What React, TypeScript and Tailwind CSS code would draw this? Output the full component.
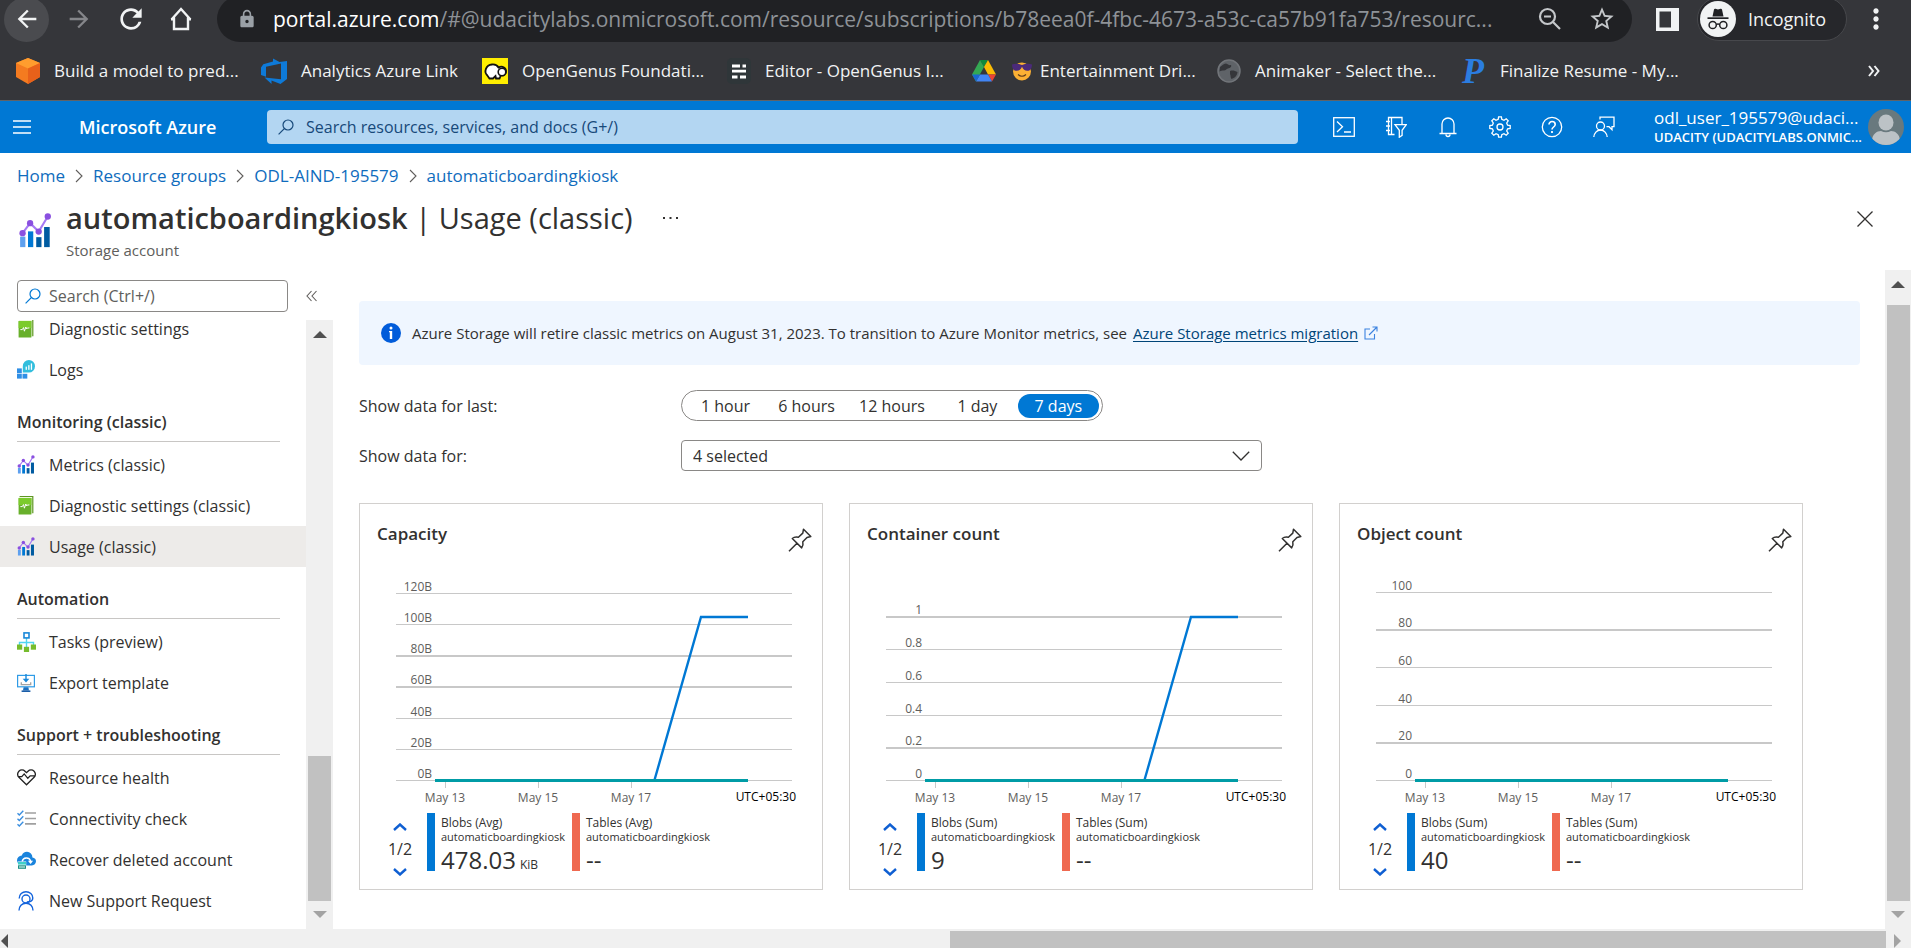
import type { ReactNode } from "react";
import { MdArrowBack, MdArrowForward, MdRefresh, MdLock, MdStarBorder, MdMoreVert } from "react-icons/md";

const FONT = "font-['Open_Sans','Noto_Sans',sans-serif]";

/* ---------- icons ---------- */

function MetricsIcon({ className }: { className: string }) {
  return (
    <svg viewBox="0 0 18 20" className={className} aria-hidden="true">
      <rect x="0.5" y="13.5" width="3" height="6" fill="#5ea0ef" />
      <rect x="5" y="10.5" width="3" height="9" fill="#0078d4" />
      <rect x="9.7" y="13.8" width="3" height="5.7" fill="#005ba1" />
      <rect x="14.2" y="8" width="3.2" height="11.5" fill="#005ba1" />
      <path d="M1.9 11.5 6.2 5.8l4.9 4.8L16.3 2" fill="none" stroke="#a67af4" strokeWidth="1.2" />
      <g fill="#8a50e0">
        <circle cx="1.9" cy="11.5" r="1.8" />
        <circle cx="6.2" cy="5.8" r="1.8" />
        <circle cx="11.1" cy="10.6" r="1.8" />
        <circle cx="16.3" cy="2" r="1.8" />
      </g>
    </svg>
  );
}

function DiagnosticIcon() {
  return (
    <svg viewBox="0 0 18 19" className="h-[19px] w-[18px]" aria-hidden="true">
      <path d="M2.8 0h13.6v17.2h-1.6V1.4H2.2z" fill="#5e9624" />
      <path d="M2.2 1.1h13v16.6h-.9V2H1.7z" fill="#eef8df" />
      <rect x="1.6" y="2" width="12.8" height="16.6" rx="0.4" fill="#68b02b" />
      <path d="M1.6 2.400a.4.400 0 0 1 .4-.4h12a.4.400 0 0 1 .4.400V9H1.600z" fill="#7ccb2c" />
      <path d="M3.4 10.600h1.900l1.200-2 .9 3.600L8.800 8l.8 2 .8-1h2" fill="none" stroke="#fff" strokeWidth="1" />
    </svg>
  );
}

function LogsIcon() {
  return (
    <svg viewBox="0 0 18 19" className="h-[19px] w-[18px]" aria-hidden="true">
      <g fill="#2f8fe6">
        <rect x="0" y="8.400" width="4.800" height="4.800" />
        <rect x="0" y="13.800" width="4.800" height="4.800" />
        <rect x="5.500" y="13.800" width="4.800" height="4.800" />
      </g>
      <path d="M11.900 0a6.100 6.300 0 0 1 0 12.600H5.800V6.300A6.100 6.300 0 0 1 11.900 0z" fill="#32bedd" />
      <rect x="8.600" y="6.600" width="1.300" height="3.200" fill="#fff" />
      <rect x="11.200" y="5.200" width="1.300" height="4.600" fill="#fff" />
      <rect x="13.800" y="3.400" width="1.300" height="6.400" fill="#fff" />
    </svg>
  );
}

function TasksIcon() {
  return (
    <svg viewBox="0 0 19 20" className="h-5 w-[19px]" aria-hidden="true">
      <path d="M9.5 6v9M2.5 15v-4.5h14V15" fill="none" stroke="#50d5f0" strokeWidth="1.4" />
      <rect x="7" y="0.9" width="5" height="5" fill="#fff" stroke="#1988d9" strokeWidth="1.6" />
      <g fill="#76bc2d">
        <rect x="0" y="12.5" width="5.2" height="5.2" />
        <rect x="6.9" y="14.8" width="5.2" height="5.2" />
        <rect x="13.8" y="12.5" width="5.2" height="5.2" />
      </g>
    </svg>
  );
}

function ExportIcon() {
  return (
    <svg viewBox="0 0 18 18" className="size-[18px]" aria-hidden="true">
      <rect x="0.6" y="1.4" width="16.8" height="11.4" fill="#fff" stroke="#2f9be6" strokeWidth="1.2" />
      <path d="M6.6 13.2h4.8l.6 3.2H6z" fill="#1b6fbf" />
      <rect x="4.6" y="16.4" width="8.8" height="1.6" fill="#1b5ea8" />
      <path d="M4.3 8.2v2.4h9.4V8.2" fill="none" stroke="#a3a3a3" strokeWidth="1.3" />
      <path d="M8.3 0h1.4v4.8h2.6L9 8.6 5.7 4.8h2.6z" fill="#1988d9" />
    </svg>
  );
}

function HealthIcon() {
  return (
    <svg viewBox="0 0 19 17" className="h-[17px] w-[19px]" aria-hidden="true">
      <path
        d="M9.5 15.8 1.9 8.3a4.3 4.3 0 0 1 0-6.1 4.3 4.3 0 0 1 6.1 0l1.5 1.5 1.5-1.5a4.3 4.3 0 0 1 6.1 0 4.3 4.3 0 0 1 0 6.1zM1.4 7.6h3.4l2.4-2.7 3.6 4.4 2.4-2.5h4.6"
        fill="none"
        stroke="#222"
        strokeWidth="1.3"
      />
    </svg>
  );
}

function ChecklistIcon() {
  return (
    <svg viewBox="0 0 19 17" className="h-[17px] w-[19px]" aria-hidden="true">
      <path d="M8 3h11M8 8.5h11M8 13.9h11" stroke="#a0a0a0" strokeWidth="1.7" />
      <path d="m.5 3.2 1.8 1.7L6.3.7M.5 8.7l1.8 1.7 4-4.2M.5 14.2l1.8 1.7 4-4.2" fill="none" stroke="#3b8fe0" strokeWidth="1.4" />
    </svg>
  );
}

function RecoverIcon() {
  return (
    <svg viewBox="0 0 19 18" className="h-[18px] w-[19px]" aria-hidden="true">
      <path d="M19 10.3a4 4 0 0 0-3.6-3.9A5.4 5.4 0 0 0 10 .8a5.5 5.5 0 0 0-5.2 3.6A5 5 0 0 0 0 9.4c0 2.9 2.3 5 5.2 5h9.7c2.3 0 4.1-1.8 4.1-4.1z" fill="#1a84dd" />
      <path d="M5.2 10.4a4.3 4.3 0 0 1 8.3-.6v1.6" fill="none" stroke="#fff" strokeWidth="1.5" />
      <path d="M10.9 9.7h5.2l-2.5 3.2z" fill="#fff" />
      <rect x="0.6" y="10.5" width="8.6" height="7.5" fill="#fff" />
      <rect x="1" y="11" width="8" height="2.6" fill="#3fd0c9" />
      <rect x="1" y="14.3" width="8" height="3.5" fill="#1c8f84" />
      <rect x="2" y="15.4" width="6" height="1.2" fill="#c9ebe7" />
    </svg>
  );
}

function SupportIcon() {
  return (
    <svg viewBox="0 0 18 20" className="h-5 w-[18px]" fill="none" stroke="#1464dc" strokeWidth="1.4" aria-hidden="true">
      <circle cx="9" cy="8" r="4" />
      <path d="M2.2 7.5C2.2 3.4 5.2.8 9 .8s6.8 2.6 6.8 6.200c0 2.500-1.800 4-6 4M2 19.500c0-4 2.900-7.300 7-7.300s7 3.300 7 7.300" />
    </svg>
  );
}

function SearchIcon({ className }: { className: string }) {
  return (
    <svg viewBox="0 0 16 16" className={className} fill="none" stroke="currentColor" strokeWidth="1.2" aria-hidden="true">
      <circle cx="10" cy="6" r="5" />
      <path d="M6.3 9.7.6 15.4" />
    </svg>
  );
}

function ChevronRight() {
  return (
    <svg viewBox="0 0 8 14" className="h-3.5 w-2" fill="none" stroke="#605e5c" strokeWidth="1.1" aria-hidden="true">
      <path d="m1 1 6 6-6 6" />
    </svg>
  );
}

function PinIcon() {
  return (
    <svg viewBox="0 0 24 24" className="size-6" fill="none" stroke="#323130" strokeWidth="1.5" strokeLinejoin="round" aria-hidden="true">
      <path d="m15.500 1.200 7.300 7.300-3.800.9-4.200 4.400c.5 2.200.3 4.300-1.100 6.100L4.300 10.500c1.700-1.500 3.900-1.700 6.100-1.200l4.400-4.200zM9 15.200l-8 8" />
    </svg>
  );
}

function Arrow({ dir, color = "#505050" }: { dir: "up" | "down" | "left" | "right"; color?: string }) {
  if (dir === "up" || dir === "down") {
    return (
      <svg viewBox="0 0 14 7" className="h-[7px] w-3.5" aria-hidden="true">
        <path d={dir === "up" ? "M0 7 7 0l7 7z" : "M0 0l7 7 7-7z"} fill={color} />
      </svg>
    );
  }
  return (
    <svg viewBox="0 0 7 14" className="h-3.5 w-[7px]" aria-hidden="true">
      <path d={dir === "left" ? "M7 0 0 7l7 7z" : "M0 0l7 7-7 7z"} fill={color} />
    </svg>
  );
}

/* ---------- browser chrome ---------- */

function Bookmark({ icon, label, wide = true, tight = false }: { icon: ReactNode; label: string; wide?: boolean; tight?: boolean }) {
  return (
    <a href="#" className={`flex shrink-0 items-center ${tight ? "gap-2" : "gap-3.5"} ${wide ? "w-[245px]" : "w-[221px]"}`}>
      <span className="flex h-[26px] shrink-0 items-center">{icon}</span>
      <span className="whitespace-nowrap">{label}</span>
    </a>
  );
}

function BrowserBar() {
  return (
    <div className="shrink-0 overflow-hidden border-b border-[#5f6368] bg-[#35363a] text-[#f1f3f4]">
      <div className="-mt-1 flex h-[46px] items-center pl-1">
        <button aria-label="Back" className="flex size-[45px] items-center justify-center rounded-full bg-[#4a4b4f]">
          <MdArrowBack className="size-7" />
        </button>
        <button aria-label="Forward" className="ml-2 flex size-11 items-center justify-center text-[#85868a]">
          <MdArrowForward className="size-7" />
        </button>
        <button aria-label="Reload" className="ml-2 flex size-11 items-center justify-center">
          <MdRefresh className="size-8" />
        </button>
        <button aria-label="Home" className="ml-1.5 flex size-11 items-center justify-center">
          <svg viewBox="0 0 24 24" className="size-6" fill="none" stroke="currentColor" strokeWidth="2.4" aria-hidden="true">
            <path d="M2.500 12.500 12 2l9.500 10.500M5 10.500V22h14V10.500M2 12.300h4M18 12.300h4" />
          </svg>
        </button>
        <div className="ml-3.5 flex h-[46px] min-w-0 flex-1 items-center rounded-full bg-[#202124] pr-4 pl-5">
          <MdLock className="size-5 shrink-0 text-[#9aa0a6]" />
          <div className="ml-4 min-w-0 flex-1 truncate text-[21px] leading-8 text-[#8e9297]">
            <span className="text-white">portal.azure.com</span>
            /#@udacitylabs.onmicrosoft.com/resource/subscriptions/b78eea0f-4fbc-4673-a53c-ca57b91fa753/resourc...
          </div>
          <button aria-label="Zoom" className="ml-4 text-[#c4c7ca]">
            <svg viewBox="0 0 24 24" className="size-6" fill="none" stroke="currentColor" strokeWidth="2.2" aria-hidden="true">
              <circle cx="9.5" cy="9.5" r="7.5" />
              <path d="m15 15 7 7M6 9.5h7" />
            </svg>
          </button>
          <button aria-label="Bookmark this tab" className="ml-[26px] text-[#c4c7ca]">
            <MdStarBorder className="size-7" />
          </button>
        </div>
        <button aria-label="Side panel" className="ml-6">
          <svg viewBox="0 0 23 23" className="size-[23px]" aria-hidden="true">
            <path d="M0 0h23v23H0zM3.5 3.5v16h11.5v-16z" fill="#f1f3f4" fillRule="evenodd" />
          </svg>
        </button>
        <button className="ml-[18px] flex h-11 w-[150px] items-center rounded-full border border-[#47484c] bg-[#26272b] pl-0.5 text-lg">
          <svg viewBox="0 0 36 36" className="size-9 shrink-0" aria-hidden="true">
            <circle cx="18" cy="18" r="18" fill="#f1f3f4" />
            <path d="M12.500 15.500 14 8.500c.2-.8.8-1 1.500-.8l2.500.7 2.500-.7c.7-.2 1.300 0 1.500.8l1.500 7z" fill="#202124" />
            <rect x="7.5" y="16.3" width="21" height="1.7" fill="#202124" />
            <g fill="none" stroke="#202124" strokeWidth="1.5">
              <circle cx="12.7" cy="24" r="3.6" />
              <circle cx="23.3" cy="24" r="3.6" />
              <path d="M16.3 23.5q1.700-1.200 3.400 0" />
            </g>
          </svg>
          <span className="ml-3">Incognito</span>
        </button>
        <button aria-label="Menu" className="mr-[19px] ml-[13px]">
          <MdMoreVert className="size-8" />
        </button>
      </div>
      <div className="flex h-[58px] items-center pl-4 text-[17px]">
        <Bookmark
          label="Build a model to pred..."
          icon={
            <svg viewBox="0 0 24 26" className="h-[26px] w-6" aria-hidden="true">
              <path d="M12 0l12 5v14l-12 7L0 19V5z" fill="#f47b20" />
              <path d="M12 0l12 5-12 5.500L0 5z" fill="#ff9d2e" />
              <path d="M24 5v14l-12 7V10.500z" fill="#e8611a" />
            </svg>
          }
        />
        <Bookmark
          wide={false}
          label="Analytics Azure Link"
          icon={
            <svg viewBox="0 0 26 26" className="size-[26px]" aria-hidden="true">
              <path d="M12 0.500 18.500 4 26 3v18l-6.500 5-9-3.500V26L3.500 19.500 20 21.200V5.500L5 8.800v9.900L0 17V9.500L2.300 6.200 12 3.500z" fill="#0e7ad8" />
            </svg>
          }
        />
        <Bookmark
          label="OpenGenus Foundati..."
          icon={
            <svg viewBox="0 0 26 26" className="size-[26px]" aria-hidden="true">
              <rect width="26" height="26" fill="#ffee00" />
              <path d="M5 17c-3-3-1.500-10 5-10.500 3.500-.3 5.500 1 6.500 3 4-2.500 8 1 7.500 4.500-.5 3-3 4-5 3l-1.500 3.500h-3.500L13.500 18 11 20.500H7.500z" fill="#fff" stroke="#111" strokeWidth="1.8" />
              <circle cx="20" cy="14" r="3.8" fill="#fff" stroke="#111" strokeWidth="1.6" />
            </svg>
          }
        />
        <Bookmark
          label="Editor - OpenGenus I..."
          icon={
            <svg viewBox="0 0 24 26" className="h-[26px] w-6" aria-hidden="true">
              <rect width="24" height="26" rx="5" fill="#2f3639" />
              <path d="M5 8h8M15.500 8H19M5 13.200h14M5 19h5.500M13 19h6" stroke="#fff" strokeWidth="2.8" />
            </svg>
          }
        />
        <Bookmark
          tight
          label="Entertainment Dri..."
          icon={
            <span className="flex items-center gap-4">
              <svg viewBox="0 0 24 22" className="h-[22px] w-6" aria-hidden="true">
                <path d="M8 0h8l-4 7z" fill="#0f8a3c" />
                <path d="M8 0l4 7-8 14.500L0 14.500z" fill="#34a853" />
                <path d="M16 0l8 14.500h-8L12 7z" fill="#fbbc04" />
                <path d="M24 14.500l-4 7-4-7z" fill="#ea4335" />
                <path d="M8 14.500h8l4 7H4z" fill="#4285f4" />
                <path d="M0 14.500h8l-4 7z" fill="#1967d2" />
              </svg>
              <svg viewBox="0 0 20 20" className="size-5" aria-hidden="true">
                <circle cx="10" cy="10.5" r="9" fill="#fbb034" />
                <path d="M0 3.500c3-1 6.500-.8 10 .5 3.500-1.300 7-1.500 10-.5-.2 4-1.500 6.300-4.700 6.300-2.600 0-4.200-1.600-5.300-4-1.100 2.400-2.700 4-5.300 4C1.500 9.800.2 7.500 0 3.500z" fill="#4b2a7a" />
                <path d="M6 13.500q4 3.500 8 0" fill="none" stroke="#5d3a1a" strokeWidth="1.2" />
              </svg>
            </span>
          }
        />
        <Bookmark
          label="Animaker - Select the..."
          icon={
            <svg viewBox="0 0 24 24" className="size-6" aria-hidden="true">
              <circle cx="12" cy="12" r="11" fill="#5f6368" stroke="#72757a" strokeWidth="1.5" />
              <path d="M3 8c2-1 3-3 6-3.500 2 1 3 2 5 1.500 1 2-1 3-3 3.500s-2 2-4 2-3 0-4.500 1zM13 12c3-1 5 0 7.500 1-.5 4-3 6-6 7-1.500-2-.5-3.500-1.500-5z" fill="#35363a" />
            </svg>
          }
        />
        <Bookmark
          label="Finalize Resume - My..."
          icon={<span className="w-6 font-['Liberation_Serif',serif] text-[36px] leading-none font-bold text-[#2b7de0] italic">P</span>}
        />
        <button aria-label="More bookmarks" className="mr-[31px] ml-auto">
          <svg viewBox="0 0 12 12" className="size-3" fill="none" stroke="currentColor" strokeWidth="2" aria-hidden="true">
            <path d="m1 1 4 5-4 5M6.5 1l4 5-4 5" />
          </svg>
        </button>
      </div>
    </div>
  );
}

/* ---------- portal header ---------- */

function HeaderButton({ label, children }: { label: string; children: ReactNode }) {
  return (
    <button aria-label={label} className="flex w-[52px] items-center justify-center">
      <svg viewBox="0 0 22 22" className="size-[22px]" fill="none" stroke="#fff" strokeWidth="1.3" aria-hidden="true">
        {children}
      </svg>
    </button>
  );
}

function PortalHeader() {
  return (
    <header className="flex h-[52px] shrink-0 items-center bg-[#0078d4] text-white">
      <button aria-label="Show portal menu" className="ml-[13px]">
        <svg viewBox="0 0 18 14" className="h-3.5 w-[18px]" stroke="#fff" strokeWidth="1.3" aria-hidden="true">
          <path d="M0 1h18M0 7h18M0 13h18" />
        </svg>
      </button>
      <a href="#" className="ml-12 w-[188px] text-lg font-semibold whitespace-nowrap">
        Microsoft Azure
      </a>
      <label className="flex h-[34px] min-w-0 flex-1 items-center gap-3 rounded-sm bg-[#b3d6f2] px-[11px] text-[#17497a]">
        <SearchIcon className="size-4 shrink-0" />
        <input
          type="search"
          aria-label="Search resources, services, and docs"
          placeholder="Search resources, services, and docs (G+/)"
          className="min-w-0 flex-1 bg-transparent text-base outline-none placeholder:text-[#17497a]"
        />
      </label>
      <div className="ml-5 flex">
        <HeaderButton label="Cloud Shell">
          <rect x="0.7" y="1.7" width="20.6" height="18.6" />
          <path d="m4 5.500 5.500 5.300L4 16M11 16h7" />
        </HeaderButton>
        <HeaderButton label="Directories and subscriptions">
          <path d="M9.500 18.500H3.500v-17h13.500v7M6.500 1.500v17M1 5.500h4M1 10h4M1 14.500h4M10 8.700h11.300l-4.200 5.600v5l-2.800 1.900v-6.900z" />
        </HeaderButton>
        <HeaderButton label="Notifications">
          <path d="M2.500 17.500h17M5 17.500V8a6 6 0 0 1 12 0v9.500M9 18.500a2 2 0 0 0 4 0" />
        </HeaderButton>
        <HeaderButton label="Settings">
          <circle cx="11" cy="11" r="3" />
          <path d="m18.600 9.200 2.600.4v2.800l-2.600.4-.9 2.200 1.500 2.200-2 2-2.200-1.500-2.200.9-.4 2.600H9.600l-.4-2.600-2.200-.9-2.200 1.500-2-2L4.300 15l-.9-2.200-2.600-.4V9.600l2.600-.4L4.300 7 2.800 4.800l2-2L7 4.300l2.200-.9.4-2.600h2.800l.4 2.600 2.200.9 2.200-1.500 2 2L17.700 7z" />
        </HeaderButton>
        <HeaderButton label="Help">
          <circle cx="11" cy="11" r="9.7" />
          <path d="M8 8.500c0-4 6.200-3.800 6.200 0 0 2.400-3.200 2.600-3.200 5" strokeWidth="1.6" />
          <path d="M11 15v2" strokeWidth="1.8" />
        </HeaderButton>
        <HeaderButton label="Feedback">
          <circle cx="7.5" cy="10" r="4" />
          <path d="M.8 21c.3-3.800 3-7 6.700-7s6.400 3.200 6.700 7M7 3.500v-2.300h14v9.500h-2v3l-3-3h-2.500" />
        </HeaderButton>
      </div>
      <button className="mr-[7px] ml-6 flex items-center gap-1 text-left">
        <span className="block w-[210px]">
          <span className="block text-[17px] leading-5 whitespace-nowrap">odl_user_195579@udaci...</span>
          <span className="block text-[13px] leading-[18px] font-semibold whitespace-nowrap">UDACITY (UDACITYLABS.ONMIC...</span>
        </span>
        <svg viewBox="0 0 36 36" className="size-9 shrink-0" aria-hidden="true">
          <clipPath id="avatar-clip">
            <circle cx="18" cy="18" r="18" />
          </clipPath>
          <g clipPath="url(#avatar-clip)">
            <rect width="36" height="36" fill="#69797e" />
            <ellipse cx="18" cy="13.5" rx="7.5" ry="8" fill="#bcc2c6" />
            <path d="M4 32c0-7 5-10 9-10q5 2.500 10 0c4 0 9 3 9 10l-5 5H9z" fill="#bcc2c6" />
          </g>
        </svg>
      </button>
    </header>
  );
}

/* ---------- page heading ---------- */

const crumbs = ["Home", "Resource groups", "ODL-AIND-195579", "automaticboardingkiosk"];

function PageHeading() {
  return (
    <div className="shrink-0">
      <nav aria-label="Breadcrumb" className="flex h-[46px] items-center gap-2.5 pl-[17px] text-[17px] text-[#0f6cbd]">
        {crumbs.map((c, i) => (
          <span key={c} className="flex items-center gap-2.5">
            {i > 0 && <ChevronRight />}
            <a href="#">{c}</a>
          </span>
        ))}
      </nav>
      <div className="flex h-[71px] items-start pl-[19px]">
        <MetricsIcon className="mt-3.5 h-[35px] w-8" />
        <div className="ml-[15px]">
          <div className="flex items-center">
            <h1 className="text-[29px] leading-[38px] whitespace-nowrap text-[#323130]">
              <span className="font-semibold">automaticboardingkiosk</span> | Usage (classic)
            </h1>
            <button aria-label="More" className="ml-[30px]">
              <svg viewBox="0 0 16 4" className="h-1 w-4" fill="#323130" aria-hidden="true">
                <path d="M0 1h2v2H0zM6.5 1h2v2h-2zM13 1h2v2h-2z" />
              </svg>
            </button>
          </div>
          <p className="mt-[3px] text-[15px] leading-5 text-[#605e5c]">Storage account</p>
        </div>
        <button aria-label="Close" className="mt-3 mr-[38px] ml-auto">
          <svg viewBox="0 0 16 16" className="size-4" stroke="#323130" strokeWidth="1.3" aria-hidden="true">
            <path d="m.5.5 15 15M15.5.5l-15 15" />
          </svg>
        </button>
      </div>
    </div>
  );
}

/* ---------- sidebar ---------- */

function NavItem({ icon, label, selected = false }: { icon: ReactNode; label: string; selected?: boolean }) {
  return (
    <li>
      <a
        href="#"
        aria-current={selected ? "page" : undefined}
        className={`flex h-[41px] items-center pl-[17px] leading-4 ${selected ? "bg-[#edebe9]" : ""}`}
      >
        <span className="flex w-8 shrink-0">{icon}</span>
        {label}
      </a>
    </li>
  );
}

function NavHeading({ children }: { children: ReactNode }) {
  return (
    <h2 className="mr-[26px] mb-0.5 ml-[17px] flex h-[52px] items-center border-b border-[#c8c6c4] pt-3 font-semibold">
      {children}
    </h2>
  );
}

function Sidebar() {
  const metrics = <MetricsIcon className="h-[19px] w-[18px]" />;
  return (
    <aside className="flex w-[333px] shrink-0 flex-col text-base text-[#323130]">
      <div className="flex h-[50px] shrink-0 items-center pt-0.5 pl-[17px]">
        <label className="flex h-8 w-[271px] items-center gap-2 rounded-sm border border-[#8a8886] pr-1.5 pl-[7px]">
          <SearchIcon className="size-4 shrink-0 text-[#0078d4]" />
          <input
            type="search"
            aria-label="Search menu"
            placeholder="Search (Ctrl+/)"
            className="min-w-0 flex-1 bg-transparent text-base outline-none placeholder:text-[#605e5c]"
          />
        </label>
        <button aria-label="Collapse menu" className="ml-[18px]">
          <svg viewBox="0 0 12 12" className="size-3" fill="none" stroke="#605e5c" strokeWidth="1.1" aria-hidden="true">
            <path d="M5.5 1 1 6l4.5 5M10.5 1 6 6l4.5 5" />
          </svg>
        </button>
      </div>
      <div className="flex min-h-0 flex-1">
        <nav aria-label="Resource menu" className="min-w-0 flex-1 overflow-hidden">
          <ul className="-mt-3">
            <NavItem icon={<DiagnosticIcon />} label="Diagnostic settings" />
            <NavItem icon={<LogsIcon />} label="Logs" />
          </ul>
          <NavHeading>Monitoring (classic)</NavHeading>
          <ul>
            <NavItem icon={metrics} label="Metrics (classic)" />
            <NavItem icon={<DiagnosticIcon />} label="Diagnostic settings (classic)" />
            <NavItem icon={metrics} label="Usage (classic)" selected />
          </ul>
          <NavHeading>Automation</NavHeading>
          <ul>
            <NavItem icon={<TasksIcon />} label="Tasks (preview)" />
            <NavItem icon={<ExportIcon />} label="Export template" />
          </ul>
          <NavHeading>Support + troubleshooting</NavHeading>
          <ul>
            <NavItem icon={<HealthIcon />} label="Resource health" />
            <NavItem icon={<ChecklistIcon />} label="Connectivity check" />
            <NavItem icon={<RecoverIcon />} label="Recover deleted account" />
            <NavItem icon={<SupportIcon />} label="New Support Request" />
          </ul>
        </nav>
        <div className="flex w-[27px] shrink-0 flex-col items-center bg-[#f0f0f0] py-[11px]">
          <Arrow dir="up" />
          <div className="mt-auto mb-2.5 h-[145px] w-[23px] bg-[#c1c1c1]" />
          <Arrow dir="down" color="#a3a3a3" />
        </div>
      </div>
    </aside>
  );
}

/* ---------- charts ---------- */

type ChartSpec = {
  title: string;
  agg: string;
  value: string;
  unit?: string;
  ticks: { label: string; y: number; heavy?: boolean }[];
  line: boolean;
};

const charts: ChartSpec[] = [
  {
    title: "Capacity",
    agg: "Avg",
    value: "478.03",
    unit: "KiB",
    line: true,
    ticks: [
      { label: "120B", y: 23 },
      { label: "100B", y: 54 },
      { label: "80B", y: 85, heavy: true },
      { label: "60B", y: 116, heavy: true },
      { label: "40B", y: 148 },
      { label: "20B", y: 179 },
      { label: "0B", y: 210 },
    ],
  },
  {
    title: "Container count",
    agg: "Sum",
    value: "9",
    line: true,
    ticks: [
      { label: "1", y: 46, heavy: true },
      { label: "0.8", y: 79 },
      { label: "0.6", y: 112 },
      { label: "0.4", y: 145 },
      { label: "0.2", y: 177, heavy: true },
      { label: "0", y: 210 },
    ],
  },
  {
    title: "Object count",
    agg: "Sum",
    value: "40",
    line: false,
    ticks: [
      { label: "100", y: 22 },
      { label: "80", y: 59, heavy: true },
      { label: "60", y: 97 },
      { label: "40", y: 135 },
      { label: "20", y: 172, heavy: true },
      { label: "0", y: 210 },
    ],
  },
];

function Legend({ bar, name, value, unit }: { bar: string; name: string; value: string; unit?: string }) {
  return (
    <div className="flex w-[145px] gap-1.5">
      <div className={`h-[58px] w-2 shrink-0 ${bar}`} />
      <div className="pt-[3px] whitespace-nowrap text-[#323130]">
        <div className="text-[12px] leading-[14px]">{name}</div>
        <div className="text-[11px] leading-[14px]">automaticboardingkiosk</div>
        <div className="text-2xl leading-8">
          {value}
          {unit && <span className="ml-1 text-[12px]">{unit}</span>}
        </div>
      </div>
    </div>
  );
}

function ChartCard({ spec }: { spec: ChartSpec }) {
  return (
    <section className="h-[387px] w-[464px] shrink-0 border border-[#d2d0ce]">
      <div className="flex h-[66px] items-start justify-between pt-[18px] pr-[10px] pl-[17px]">
        <h3 className="text-[17px] leading-6 font-semibold text-[#323130]">{spec.title}</h3>
        <button aria-label={`Pin ${spec.title}`} className="mt-1.5">
          <PinIcon />
        </button>
      </div>
      <svg viewBox="0 0 462 240" className="block h-[240px] w-full" role="img" aria-label={`${spec.title} chart`}>
        {spec.ticks.map((t) => (
          <g key={t.label}>
            <rect x="36" y={t.y} width="396" height={t.heavy ? 2 : 1} fill="#c8c8c8" />
            <text x="72" y={t.y - 2} textAnchor="end" fontSize="12" fill="#605e5c">
              {t.label}
            </text>
          </g>
        ))}
        {[85, 178, 271].map((x, i) => (
          <g key={x}>
            <rect x={x} y="211" width="1" height="7" fill="#c8c8c8" />
            <text x={x} y="232" textAnchor="middle" fontSize="12" fill="#605e5c">
              {`May ${13 + i * 2}`}
            </text>
          </g>
        ))}
        <text x="436" y="231" textAnchor="end" fontSize="12" fill="#000">
          UTC+05:30
        </text>
        {spec.line && <path d="M294.5 210 341 47h47" fill="none" stroke="#0078d4" strokeWidth="2.4" />}
        <rect x="75" y="209" width="313" height="3" fill="#009ca6" />
      </svg>
      <div className="flex pt-[3px] pl-[28px]">
        <div className="flex w-[39px] flex-col pt-[10px] text-base text-[#323130]">
          <button aria-label="Previous page" className="flex h-2 w-6 justify-center">
            <svg viewBox="0 0 14 8" className="h-2 w-3.5" fill="none" stroke="#0f5fd2" strokeWidth="2.4" aria-hidden="true">
              <path d="m1 7 6-5.500L13 7" />
            </svg>
          </button>
          <span className="flex h-[37px] w-6 items-center justify-center pb-0.5">1/2</span>
          <button aria-label="Next page" className="flex h-2 w-6 justify-center">
            <svg viewBox="0 0 14 8" className="h-2 w-3.5" fill="none" stroke="#0f5fd2" strokeWidth="2.4" aria-hidden="true">
              <path d="m1 1 6 5.500L13 1" />
            </svg>
          </button>
        </div>
        <Legend bar="bg-[#0078d4]" name={`Blobs (${spec.agg})`} value={spec.value} unit={spec.unit} />
        <Legend bar="bg-[#ef6950]" name={`Tables (${spec.agg})`} value="--" />
      </div>
    </section>
  );
}

/* ---------- main ---------- */

const ranges = ["1 hour", "6 hours", "12 hours", "1 day", "7 days"];

function Main() {
  return (
    <main className="min-w-0 flex-1 overflow-hidden pt-[31px] pr-[25px] pl-[26px] text-[#323130]">
      <div className="flex h-16 items-center rounded-sm bg-[#eff6ff] pl-[22px] text-[15px]">
        <svg viewBox="0 0 20 20" className="size-5 shrink-0" aria-hidden="true">
          <circle cx="10" cy="10" r="10" fill="#015cda" />
          <circle cx="10" cy="5" r="1.5" fill="#fff" />
          <path d="M8 8h3.200v8H8.800V9.200H8z" fill="#fff" />
        </svg>
        <p className="ml-[11px] whitespace-nowrap">
          Azure Storage will retire classic metrics on August 31, 2023. To transition to Azure Monitor metrics, see
        </p>
        <a href="#" className="ml-1.5 flex items-center gap-1.5 whitespace-nowrap text-[#004578]">
          <span className="underline underline-offset-2">Azure Storage metrics migration</span>
          <svg viewBox="0 0 14 14" className="size-3.5" fill="none" stroke="#3b82e0" strokeWidth="1.1" aria-hidden="true">
            <path d="M6 3H1v10h9.500V8M5 9l8-8M8.500 1H13v4.500" />
          </svg>
        </a>
      </div>
      <div className="mt-[25px] flex h-[31px] items-center text-base">
        <span id="range-label" className="w-[322px] shrink-0 leading-none">
          Show data for last:
        </span>
        <div role="group" aria-labelledby="range-label" className="flex h-[31px] items-center rounded-full border border-[#8a8886] p-[3px]">
          {ranges.map((r) => (
            <button
              key={r}
              aria-pressed={r === "7 days"}
              className={`h-6 min-w-[81px] rounded-full px-3 leading-none whitespace-nowrap ${r === "7 days" ? "bg-[#0078d4] text-white" : ""}`}
            >
              {r}
            </button>
          ))}
        </div>
      </div>
      <div className="mt-[19px] flex h-[31px] items-center text-base">
        <label htmlFor="services" className="w-[322px] shrink-0">
          Show data for:
        </label>
        <div className="relative w-[581px]">
          <select id="services" className="block h-[31px] w-full appearance-none rounded-sm border border-[#8a8886] bg-white pl-[11px]">
            <option>4 selected</option>
          </select>
          <svg viewBox="0 0 18 10" className="pointer-events-none absolute top-[11px] right-3 h-2.5 w-[18px]" fill="none" stroke="#323130" strokeWidth="1.3" aria-hidden="true">
            <path d="m.8.8 8.200 8.200 8.200-8.200" />
          </svg>
        </div>
      </div>
      <div className="mt-8 flex gap-[26px]">
        {charts.map((c) => (
          <ChartCard key={c.title} spec={c} />
        ))}
      </div>
    </main>
  );
}

export default function App() {
  return (
    <div className={`flex h-screen flex-col overflow-hidden bg-white ${FONT}`}>
      <BrowserBar />
      <PortalHeader />
      <PageHeading />
      <div className="flex min-h-0 flex-1">
        <Sidebar />
        <Main />
        <div className="flex w-[26px] shrink-0 flex-col items-center bg-[#f0f0f0] py-[11px]">
          <Arrow dir="up" />
          <div className="mt-[17px] mb-2.5 w-[23px] flex-1 bg-[#c1c1c1]" />
          <Arrow dir="down" color="#a3a3a3" />
        </div>
      </div>
      <div className="flex h-[19px] shrink-0 items-end overflow-hidden bg-[#f0f0f0]">
        <div className="ml-px">
          <Arrow dir="left" />
        </div>
        <div className="mr-2 ml-auto h-[17px] w-[49%] bg-[#c1c1c1]" />
        <div className="mr-2.5">
          <Arrow dir="right" color="#a3a3a3" />
        </div>
      </div>
    </div>
  );
}
